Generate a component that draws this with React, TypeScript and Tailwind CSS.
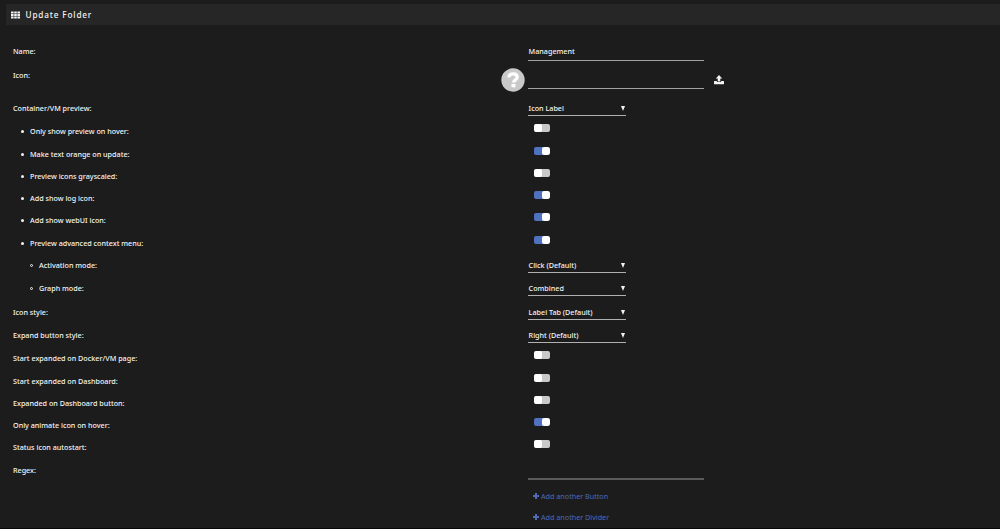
import type { ReactNode } from 'react';

type Row = {
  label: string;
  level?: number;
  kind: 'text' | 'icon' | 'select' | 'switch' | 'regex';
  value?: string;
  on?: boolean;
};

const rows: Row[] = [
  { label: 'Name:', kind: 'text', value: 'Management' },
  { label: 'Icon:', kind: 'icon' },
  { label: 'Container/VM preview:', kind: 'select', value: 'Icon Label' },
  { label: 'Only show preview on hover:', level: 1, kind: 'switch' },
  { label: 'Make text orange on update:', level: 1, kind: 'switch', on: true },
  { label: 'Preview icons grayscaled:', level: 1, kind: 'switch' },
  { label: 'Add show log icon:', level: 1, kind: 'switch', on: true },
  { label: 'Add show webUI icon:', level: 1, kind: 'switch', on: true },
  { label: 'Preview advanced context menu:', level: 1, kind: 'switch', on: true },
  { label: 'Activation mode:', level: 2, kind: 'select', value: 'Click (Default)' },
  { label: 'Graph mode:', level: 2, kind: 'select', value: 'Combined' },
  { label: 'Icon style:', kind: 'select', value: 'Label Tab (Default)' },
  { label: 'Expand button style:', kind: 'select', value: 'Right (Default)' },
  { label: 'Start expanded on Docker/VM page:', kind: 'switch' },
  { label: 'Start expanded on Dashboard:', kind: 'switch' },
  { label: 'Expanded on Dashboard button:', kind: 'switch' },
  { label: 'Only animate icon on hover:', kind: 'switch', on: true },
  { label: 'Status icon autostart:', kind: 'switch' },
  { label: 'Regex:', kind: 'regex' },
];

const heights = {
  text: 'h-[23.8px]',
  icon: 'h-[33px]',
  select: 'h-[23.4px]',
  switch: 'h-[22.25px]',
  regex: 'h-[21px]',
};

const indents = ['pl-[13px]', 'pl-[21px]', 'pl-[30px]'];

function Switch({ on }: { on?: boolean }) {
  return (
    <div className={`ml-[6px] mt-[-1px] flex h-2 w-4 overflow-hidden rounded-[2px] ${on ? 'justify-end bg-[#5070c0]' : 'bg-[#c8c8c8]'}`}>
      <div className="h-2 w-2 rounded-[2px] bg-white" />
    </div>
  );
}

function Select({ value }: { value?: string }) {
  return (
    <div className="flex h-[14px] w-[98px] justify-between border-b border-[#b0b0b0] pr-[1px] pl-[0.6px]">
      <span>{value}</span>
      <svg viewBox="0 0 4 5" className="mt-[4px] h-[5px] w-[4px]">
        <path d="M0 0h4L2 5z" fill="#f2f2f2" />
      </svg>
    </div>
  );
}

function IconPicker() {
  return (
    <div className="-ml-[27px] flex">
      <svg viewBox="0 0 24 24" className="-mt-px h-6 w-6">
        <circle cx="12" cy="12" r="11.7" fill="#c9c9c9" />
        <path d="M7.800 9.300C8 6.900 9.500 5.900 12 5.900s4.200 1.300 4.200 3.400c0 2.500-3.600 2.700-3.600 5.300" fill="none" stroke="#fff" strokeWidth="3.300" />
        <path d="M10.500 15.900h4v3.400h-4z" fill="#fff" />
      </svg>
      <div className="ml-[3px] h-[20px] w-[176px] border-b border-[#a0a0a0]" />
      <svg viewBox="0 0 10 10" className="ml-[10px] mt-[6px] h-[10px] w-[10px]" fill="#f2f2f2">
        <path d="M5 0l3.2 3.4H6.3v3H3.7v-3H1.8z" />
        <path d="M.5 6h2.400v1h4.200V6h2.400q.5 0 .5.5v2.200q0 .5-.5.5h-9Q0 9.200 0 8.700V6.500Q0 6 .5 6z" />
      </svg>
    </div>
  );
}

function Field({ row }: { row: Row }) {
  switch (row.kind) {
    case 'text':
      return <div className="h-[16px] w-[176px] border-b border-[#a0a0a0] pl-[0.6px]">{row.value}</div>;
    case 'icon':
      return <IconPicker />;
    case 'select':
      return <Select value={row.value} />;
    case 'switch':
      return <Switch on={row.on} />;
    default:
      return <div className="h-[16px] w-[176px] border-b-2 border-[#5a5a5a]" />;
  }
}

function AddLink({ children }: { children: ReactNode }) {
  return (
    <a className="flex h-[21px] items-center gap-[2px]">
      <svg viewBox="0 0 6 6" className="h-[6px] w-[6px]">
        <path d="M2 0h2v2h2v2H4v2H2V4H0V2h2z" fill="currentColor" />
      </svg>
      <span>{children}</span>
    </a>
  );
}

export default function App() {
  return (
    <div className="h-[529px] overflow-hidden border-b border-[#080808] bg-[#1c1c1c] pt-1 font-['Noto_Sans',sans-serif] text-[7.2px] leading-[12px] font-medium text-[#f4f4f4]">
      <header className="ml-[6px] flex h-[21px] items-center gap-[5.5px] bg-[#262626] pl-[5px] text-[8.2px] tracking-[0.85px]">
        <svg viewBox="0 0 9 8" className="h-[8px] w-[9px]" fill="#f2f2f2">
          <path d="M0 .4h2.6v2H0zM3.200.4h2.6v2H3.200zM6.400.4H9v2H6.400zM0 3h2.600v2H0zM3.200 3h2.600v2H3.200zM6.400 3H9v2H6.400zM0 5.600h2.600v2H0zM3.200 5.600h2.600v2H3.200zM6.400 5.600H9v2H6.400z" />
        </svg>
        <h1>Update Folder</h1>
      </header>

      <form className="pt-[20.2px]">
        {rows.map((row) => (
          <div key={row.label} className={`grid grid-cols-[528px_1fr] ${heights[row.kind]}`}>
            <div className={`flex items-start ${indents[row.level ?? 0]}`}>
              {row.level === 1 && <i className="mt-[5px] mr-[6px] h-[3px] w-[3px] rounded-full bg-[#f2f2f2]" />}
              {row.level === 2 && <i className="mt-[5px] mr-[6px] h-[3px] w-[3px] rounded-full border-[0.5px] border-[#f2f2f2]" />}
              <span>{row.label}</span>
            </div>
            <Field row={row} />
          </div>
        ))}
      </form>

      <div className="pt-[1px] pl-[533px] font-normal text-[#5069b4]">
        <AddLink>Add another Button</AddLink>
        <AddLink>Add another Divider</AddLink>
      </div>
    </div>
  );
}
